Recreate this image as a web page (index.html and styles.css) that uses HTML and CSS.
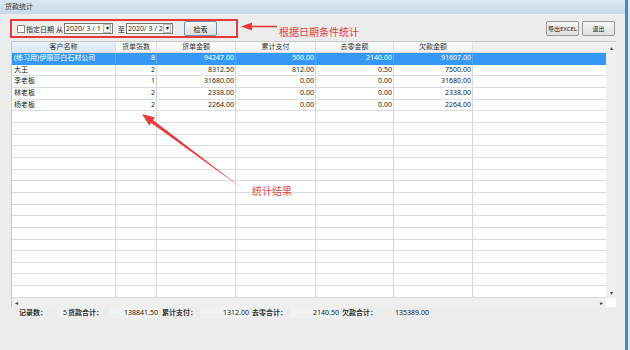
FILE: index.html
```html
<!DOCTYPE html>
<html lang="zh-CN">
<head>
  <meta charset="UTF-8">
  <title>货款统计</title>
  <link rel="stylesheet" href="styles.css">
</head>
<body>
  <div class="window">
    <div class="titlebar">货款统计</div>

    <div class="toolbar">
      <div class="query">
        <span class="check"></span>
        <span class="lbl-date">指定日期</span>
        <span class="lbl-from">从</span>
        <div class="combo"><span class="combo-text">2020/ 3 / 1</span><span class="combo-btn">▾</span></div>
        <span class="lbl-to">至</span>
        <div class="combo combo-to"><span class="combo-text">2020/ 3 / 2</span><span class="combo-btn">▾</span></div>
        <button class="btn btn-search">检索</button>
      </div>
      <div class="actions">
        <button class="btn">导出EXCEL</button>
        <button class="btn">退出</button>
      </div>
    </div>

    <div class="grid">
      <div class="grid-body">
        <div class="row head">
          <span class="first">客户名称</span>
          <span>货单张数</span>
          <span>货单金额</span>
          <span>累计支付</span>
          <span>去零金额</span>
          <span>欠款金额</span>
          <span class="fill"></span>
        </div>
        <div id="rows">
          <div class="row selected">
            <span class="name">(练习用)伊丽莎白石材公司</span>
            <span class="num">8</span>
            <span class="num">94247.00</span>
            <span class="num">500.00</span>
            <span class="num">2140.00</span>
            <span class="num">91607.00</span>
            <span class="fill"></span>
          </div>
          <div class="row">
            <span class="name">大王</span>
            <span class="num">2</span>
            <span class="num">8312.50</span>
            <span class="num">812.00</span>
            <span class="num">0.50</span>
            <span class="num">7500.00</span>
            <span class="fill"></span>
          </div>
          <div class="row">
            <span class="name">李老板</span>
            <span class="num">1</span>
            <span class="num">31680.00</span>
            <span class="num">0.00</span>
            <span class="num">0.00</span>
            <span class="num">31680.00</span>
            <span class="fill"></span>
          </div>
          <div class="row">
            <span class="name">林老板</span>
            <span class="num">2</span>
            <span class="num">2338.00</span>
            <span class="num">0.00</span>
            <span class="num">0.00</span>
            <span class="num">2338.00</span>
            <span class="fill"></span>
          </div>
          <div class="row">
            <span class="name">杨老板</span>
            <span class="num">2</span>
            <span class="num">2264.00</span>
            <span class="num">0.00</span>
            <span class="num">0.00</span>
            <span class="num">2264.00</span>
            <span class="fill"></span>
          </div>
        </div>
      </div>
      <div class="vscroll"><span>▴</span><span>▾</span></div>
      <div class="hscroll"><span>◂</span><span>▸</span></div>
      <div class="corner"></div>
    </div>

    <div class="footer">
      <span class="f-lbl w1">记录数：</span><span class="f-val v1">5</span>
      <span class="f-lbl w2">货款合计：</span><span class="f-val v2">138841.50</span>
      <span class="f-lbl w3">累计支付：</span><span class="f-val v3">1312.00</span>
      <span class="f-lbl w4">去零合计：</span><span class="f-val v4">2140.50</span>
      <span class="f-lbl w5">欠款合计：</span><span class="f-val v5">135389.00</span>
    </div>
  </div>

  <!-- annotations drawn over the screenshot -->
  <svg class="marks" width="630" height="350" viewBox="0 0 630 350">
    <line x1="277" y1="26.5" x2="250" y2="26.5" stroke="#e8393c" stroke-width="1.6"/>
    <polygon points="241,26.5 252,22.5 252,30.5" fill="#e8393c"/>
    <polygon points="243,189 152.6,119.8 150.6,122.6" fill="#e8393c"/>
    <polygon points="142,114 155,117.6 149.2,125.4" fill="#e8393c"/>
  </svg>
  <span class="note note-date">根据日期条件统计</span>
  <span class="note note-result">统计结果</span>

  <script>
    // fill the rest of the grid with empty rows
    const rows = document.getElementById("rows");
    for (let i = 0; i < 16; i++) {
      const row = document.createElement("div");
      row.className = "row";
      for (let j = 0; j < 7; j++) {
        const cell = document.createElement("span");
        if (j === 6) cell.className = "fill";
        row.appendChild(cell);
      }
      rows.appendChild(row);
    }
  </script>
</body>
</html>
```

FILE: styles.css
```css
body {
  margin: 0;
  width: 630px;
  height: 350px;
  overflow: hidden;
  position: relative;
  background: #e4eaef;
  font-family: "Noto Sans", "Noto Sans CJK SC", sans-serif;
  font-size: 7px;
  color: #222;
}

.window {
  width: 625px;
  height: 350px;
  background: #ececec;
  border-right: 3px solid #3d8ec2;
}

.titlebar {
  height: 14px;
  line-height: 14px;
  padding-left: 5px;
  background: linear-gradient(#dbe6f0, #c9d8e6);
  color: #333;
}

.toolbar {
  display: flex;
  justify-content: space-between;
  align-items: flex-start;
  height: 22px;
  padding: 5px 10px 0 10px;
}

.query {
  display: flex;
  align-items: center;
  box-sizing: border-box;
  width: 228px;
  height: 19px;
  padding-left: 5px;
  border: 2px solid #e5393b;
}

.query > * {
  flex-shrink: 0;
}

.check {
  width: 6px;
  height: 6px;
  border: 1px solid #8a8a8a;
  background: #fff;
  margin-right: 1px;
}

.lbl-date {
  margin-right: 1px;
  color: #333;
}

.lbl-from {
  margin-left: 1px;
}

.lbl-to {
  margin-left: 5px;
}

.combo {
  display: flex;
  align-items: center;
  box-sizing: border-box;
  width: 49px;
  height: 11px;
  margin-left: 1px;
  border: 1px solid #7a7a7a;
  background: #fff;
  overflow: hidden;
}

.combo-to {
  width: 47px;
}

.combo-text {
  flex: 1;
  min-width: 0;
  padding-left: 1px;
  font-size: 7px;
  line-height: 9px;
  white-space: nowrap;
  overflow: hidden;
}

.combo-btn {
  flex-shrink: 0;
  width: 6px;
  height: 7px;
  margin-right: 1px;
  border: 1px solid #bbb;
  font-size: 6px;
  line-height: 7px;
  text-align: center;
  color: #111;
  background: #f4f4f4;
}

.btn {
  box-sizing: border-box;
  width: 33px;
  height: 15px;
  padding: 0;
  border: 1px solid #9a9a9a;
  border-radius: 2px;
  background: linear-gradient(#f7f7f7, #dedede);
  font-family: inherit;
  font-size: 6px;
  color: #222;
}

.btn-search {
  margin-left: 11px;
  border-color: #6b93b5;
  font-size: 7px;
}

.actions {
  display: flex;
  gap: 3px;
  margin-top: 2px;
}

.grid {
  display: grid;
  grid-template-columns: 594px 10px;
  grid-template-rows: 256px 9px;
  box-sizing: border-box;
  width: 605px;
  height: 266px;
  margin-left: 11px;
  border: 1px solid #c8c8c8;
  background: #fff;
}

.grid-body {
  overflow: hidden;
}

.row {
  display: grid;
  grid-template-columns: 104px 41px 79px 80px 78px 79px 1fr;
  box-sizing: border-box;
  height: 11.67px;
  border-bottom: 1px solid #dcdcdc;
  line-height: 10.5px;
}

.row span {
  border-right: 1px solid #d6d6d6;
  padding: 0 2px;
  white-space: nowrap;
  overflow: hidden;
}

.row .fill {
  border-right: none;
}

.row .num {
  text-align: right;
  padding-right: 1px;
}

.head {
  height: 11px;
  background: linear-gradient(#fdfdfd, #f1f1f1);
  color: #333;
}

.head span {
  text-align: center;
  border-right-color: #e2e2e2;
}

.head .first {
  background: linear-gradient(#e9f1f9, #dae6f2);
}

.head .fill {
  background: #f0f0f0;
}

.selected {
  background: #3598f4;
  color: #fff;
  border-bottom-color: #3598f4;
}

.selected span {
  border-right-color: #5aaaf5;
}

.vscroll {
  grid-row: 1;
  grid-column: 2;
  display: flex;
  flex-direction: column;
  justify-content: space-between;
  align-items: center;
  padding: 2px 0 1px;
  background: #efefef;
  font-size: 6px;
  color: #444;
}

.hscroll {
  display: flex;
  justify-content: space-between;
  align-items: center;
  padding: 0 3px;
  background: #efefef;
  font-size: 6px;
  color: #444;
}

.corner {
  background: #fff;
}

.footer {
  display: flex;
  height: 11px;
  line-height: 11px;
  padding-left: 19px;
  color: #222;
}

.f-lbl {
  font-weight: bold;
  color: #333;
}

.f-val {
  text-align: right;
  background: #f1f1f1;
}

.w1 { width: 38px; }
.v1 { width: 10px; }
.w2 { width: 41px; margin-left: 1px; }
.v2 { width: 49px; }
.w3 { width: 38px; margin-left: 4px; }
.v3 { width: 49px; }
.w4 { width: 38px; margin-left: 3px; }
.v4 { width: 49px; }
.w5 { width: 43px; margin-left: 3px; }
.v5 { width: 43px; padding-left: 10px; text-align: left; background: none; }

.marks {
  position: absolute;
  top: 0;
  left: 0;
  pointer-events: none;
}

.note {
  position: absolute;
  font-size: 10px;
  line-height: 12px;
  color: #e8393c;
  white-space: nowrap;
}

.note-date {
  left: 279px;
  top: 26px;
}

.note-result {
  left: 252px;
  top: 185px;
  color: #e6474a;
}
```
